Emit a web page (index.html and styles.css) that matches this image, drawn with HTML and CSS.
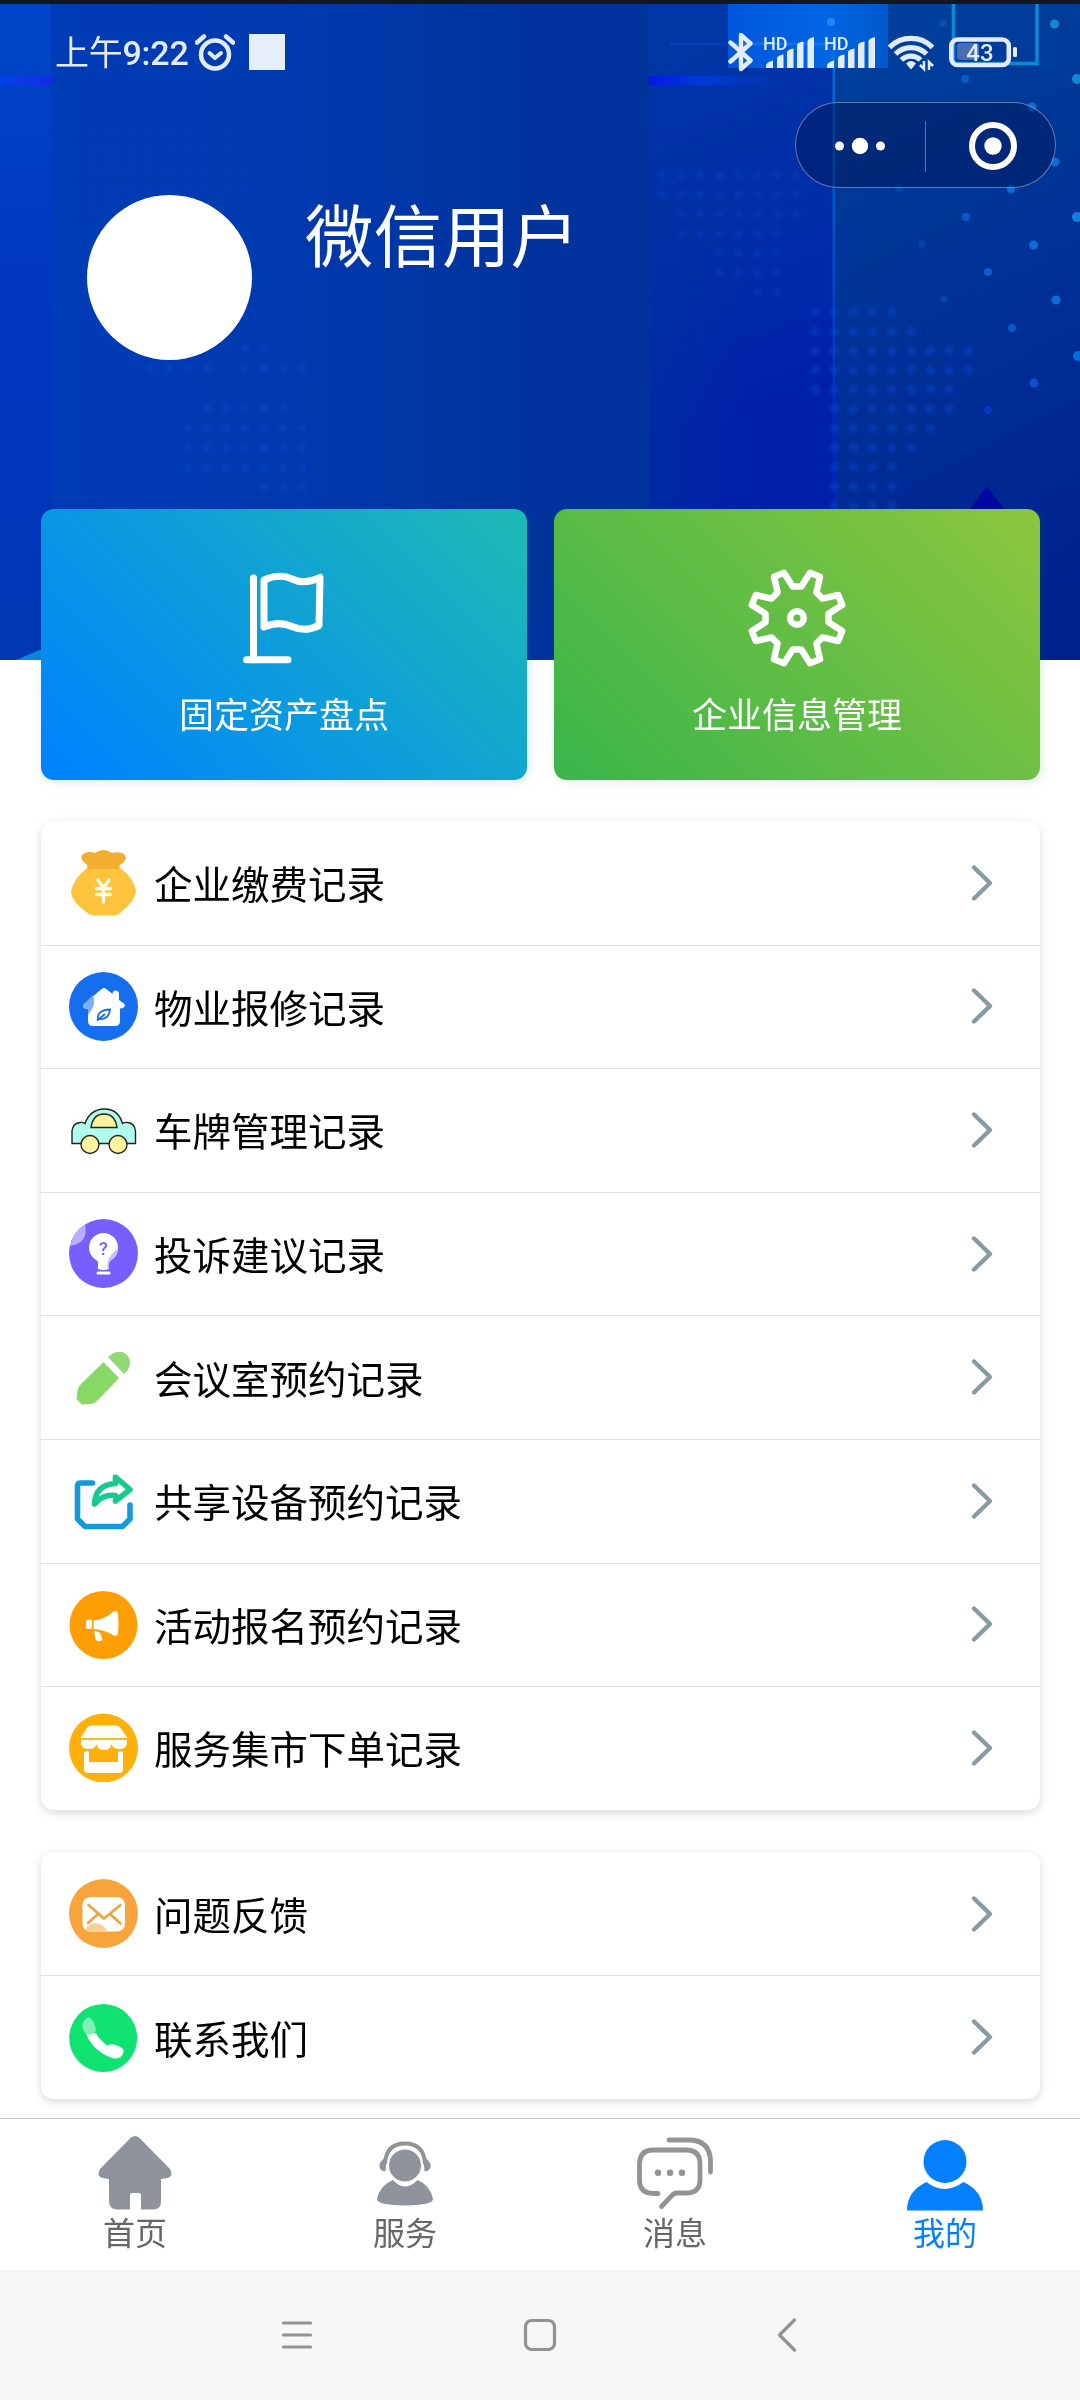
FILE: index.html
```html
<!DOCTYPE html>
<html lang="zh-CN">
<head>
<meta charset="utf-8">
<title>我的</title>
<link rel="stylesheet" href="styles.css">
</head>
<body>
<div class="screen">
  <header class="hero">
    <svg class="hero-art" viewBox="0 0 1080 660" aria-hidden="true">
      <defs>
        <linearGradient id="base" x1="0" x2="1"><stop offset="0" stop-color="#003cb8"/><stop offset=".25" stop-color="#003ab0"/><stop offset=".5" stop-color="#00339c"/><stop offset="1" stop-color="#003398"/></linearGradient>
        <linearGradient id="edge" x1="0" x2="0" y1="0" y2="1"><stop offset="0" stop-color="#0046c8"/><stop offset=".5" stop-color="#0035c2"/><stop offset="1" stop-color="#0037b2"/></linearGradient>
        <linearGradient id="mid" gradientUnits="userSpaceOnUse" x1="660" y1="60" x2="790" y2="400"><stop offset="0" stop-color="#0036a6"/><stop offset=".5" stop-color="#002ea8"/><stop offset="1" stop-color="#0020aa"/></linearGradient>
        <linearGradient id="midfade" x1="0" x2="1"><stop offset="0" stop-color="#00329c"/><stop offset="1" stop-color="#00329c" stop-opacity="0"/></linearGradient>
        <linearGradient id="right" x1="0.4" x2=".6" y1="0" y2="1"><stop offset="0" stop-color="#00409a"/><stop offset=".5" stop-color="#003097"/><stop offset="1" stop-color="#00208e"/></linearGradient>
        <linearGradient id="tile" x1="0" x2="1"><stop offset="0" stop-color="#0056dc"/><stop offset=".6" stop-color="#0066e4"/><stop offset="1" stop-color="#0058cc"/></linearGradient>
        <linearGradient id="streakL" x1="0" x2="1"><stop offset="0" stop-color="#0044f0"/><stop offset="1" stop-color="#2020f4"/></linearGradient>
        <linearGradient id="streakR" x1="0" x2="1"><stop offset="0" stop-color="#0a10f4"/><stop offset=".4" stop-color="#003cdc"/><stop offset="1" stop-color="#003cdc" stop-opacity="0"/></linearGradient>
        <linearGradient id="beam" x1="0" x2="0" y1="0" y2="1"><stop offset="0" stop-color="#0a78e0"/><stop offset=".35" stop-color="#0556c8"/><stop offset=".6" stop-color="#0828d0"/><stop offset="1" stop-color="#0010b0"/></linearGradient>
        <radialGradient id="dot"><stop offset="0" stop-color="#0a4ad0"/><stop offset="1" stop-color="#0a4ad0" stop-opacity="0"/></radialGradient>
        <pattern id="dotsR" x="805.4" y="302.4" width="19.2" height="19.4" patternUnits="userSpaceOnUse"><circle cx="9.6" cy="9.6" r="7.500" fill="url(#dot)"/></pattern>
        <pattern id="dotsM" x="652.6" y="165.4" width="19.1" height="19.6" patternUnits="userSpaceOnUse"><circle cx="9.6" cy="9.6" r="7" fill="url(#dot)"/></pattern>
        <pattern id="dotsL" x="178.4" y="398.4" width="19" height="19.8" patternUnits="userSpaceOnUse"><circle cx="9.6" cy="9.6" r="7" fill="url(#dot)"/></pattern>
        <symbol id="bars" viewBox="0 0 51 40"><path d="M2 36v-2q0-4 7-5.500V36zM13 36V26q1-3 6.500-3.500V36zM23 36V20q1-3 6.500-3.500V36zM33 36V13q1-3 6.500-3.500V36zM43.500 36V9q1-3 6.500-4V36z"/></symbol>
        <symbol id="chevron" viewBox="0 0 24 40"><path d="M4 4.500l16 15.500L4 35.500"/></symbol>
      </defs>
      <rect width="1080" height="660" fill="url(#base)"/>
      <rect width="51" height="660" fill="url(#edge)"/>
      <rect x="649" width="186" height="660" fill="url(#mid)"/>
      <rect x="649" y="200" width="100" height="460" fill="url(#midfade)" opacity=".5"/>
      <rect x="834" width="246" height="660" fill="url(#right)"/>
      <rect x="728" y="4" width="160" height="64" fill="url(#tile)"/>
      <path d="M730 44h98" stroke="#1c86f0" stroke-width="3" opacity=".5"/>
      <path d="M670 44h60" stroke="#1c66e0" stroke-width="3" opacity=".2"/>
      <path d="M953.500 4V63.500H1037V4" fill="none" stroke="#0a8ad4" stroke-width="3.500"/>
      <rect x="832.500" y="40" width="2.500" height="620" fill="url(#beam)" opacity=".8"/>
      <rect y="76" width="51" height="9" fill="url(#streakL)" opacity=".7"/>
      <rect x="649" y="76" width="130" height="9" fill="url(#streakR)" opacity=".85"/>
      <g opacity=".55">
        <path d="M805 302h96v19h19v20h58v38h-19v39h-20v19h-19v20h-20v58h-76V399h-19z" fill="url(#dotsR)"/>
        <path d="M653 165h153v60h-20v78h-38v-20h-38v-38h-38v-40h-19z" fill="url(#dotsM)" opacity=".7"/>
        <path d="M198 398h95v20h19v79h-57v-20h-77v-59h20zM140 358h76v20h-76zM235 338h38v20h38v20h-76z" fill="url(#dotsL)"/>
        <path d="M64 130h190v50h20v20h-150v100H64z" fill="url(#dotsL)" opacity=".4"/>
      </g>
      <g fill="#0a6cd8">
        <circle cx="1054.500" cy="24" r="4.500" fill="#1488c8"/><circle cx="1077" cy="79" r="5" fill="#1488d8"/><circle cx="965" cy="79" r="4" opacity=".7"/><circle cx="1032" cy="107" r="4.500"/><circle cx="1055" cy="162" r="4.500"/><circle cx="1011" cy="189" r="4"/><circle cx="1077" cy="217" r="5" fill="#1080e0"/><circle cx="966" cy="217" r="4" opacity=".7"/><circle cx="1033.500" cy="245" r="4.500"/><circle cx="988" cy="272" r="4" opacity=".8"/><circle cx="1056" cy="300" r="4.500"/><circle cx="1012" cy="328" r="4" opacity=".7"/><circle cx="1078" cy="356" r="5"/><circle cx="1034" cy="383" r="4.500" fill="#0c50d0"/><circle cx="988" cy="410" r="4" fill="#0838c8"/><circle cx="944" cy="299" r="4" opacity=".3"/><circle cx="922" cy="244" r="4" opacity=".25"/><circle cx="831" cy="22" r="4" fill="#2a90f8" opacity=".8"/><circle cx="943" cy="23" r="4" opacity=".4"/><circle cx="899" cy="188" r="4" opacity=".3"/>
      </g>
      <path d="M987 486l18 24h-36z" fill="#0008a0"/>
      <path d="M16 660l26-11v11z" fill="#0c86dc"/>
      <rect width="1080" height="4" fill="#15171c"/>
    </svg>

    <div class="status">
      <div class="status-left">
        <span class="clock">上午<b>9:22</b></span>
        <svg width="40" height="38" viewBox="0 0 40 38" fill="none" stroke="#e2ecfc" stroke-linecap="round">
          <circle cx="20" cy="21.500" r="14" stroke-width="4.500"/><path d="M14.500 20l5.500 5 6-5" stroke-width="4" stroke-linejoin="round"/><path d="M2 9.500l7-6M38 9.500l-7-6" stroke-width="4.500"/>
        </svg>
        <i class="block"></i>
      </div>
      <div class="status-right">
        <svg width="26" height="40" viewBox="0 0 26 40" fill="none" stroke="#e2ecfc" stroke-width="4.400" stroke-linejoin="round" stroke-linecap="round"><path d="M2.500 10.500L22.500 28.500L13 37V3l9.500 8.500L2.500 29.500"/></svg>
        <svg class="signal" width="51" height="40"><text class="hd" x="-1" y="17.500">HD</text><use href="#bars" width="51" height="40"/></svg>
        <svg class="signal" width="51" height="40"><text class="hd" x="-1" y="17.500">HD</text><use href="#bars" width="51" height="40"/></svg>
        <svg class="wifi" width="46" height="40" viewBox="0 0 46 40" fill="none" stroke="#e2ecfc" stroke-width="5.200"><path d="M1.500 15.500a30 30 0 0 1 43 0M7.500 22a22 22 0 0 1 31 0M13.500 28a13.500 13.500 0 0 1 19 0"/><path d="M18.500 31.500q4.500-4 9 0L23 37z" fill="#e2ecfc" stroke-width="1"/><path d="M36 29v8l-4-4M41 38v-8l4 4" stroke-width="2.500"/></svg>
        <svg class="battery" width="69" height="40" viewBox="0 0 69 40"><rect x="8" y="11" width="22" height="17" rx="3" fill="#4a6cb4"/><rect x="2.300" y="7.500" width="57.500" height="25.500" rx="6.500" fill="none" stroke="#e2ecfc" stroke-width="4.600"/><rect x="64" y="15" width="4" height="10" rx="1.500" fill="#e2ecfc"/><text class="pct" x="31" y="28.500">43</text></svg>
      </div>
    </div>

    <div class="capsule">
      <svg width="44" height="20" viewBox="0 0 44 20" fill="#fff"><circle cx="5.500" cy="10" r="4.500"/><circle cx="26" cy="10" r="8.200"/><circle cx="46.500" cy="10" r="4.500"/></svg>
      <i class="split"></i>
      <svg width="50" height="50" viewBox="0 0 50 50"><circle cx="25" cy="25" r="21" fill="none" stroke="#fff" stroke-width="6"/><circle cx="25" cy="25" r="8.700" fill="#fff"/></svg>
    </div>

    <div class="profile">
      <div class="avatar"></div>
      <h1 class="name">微信用户</h1>
    </div>
  </header>

  <main class="content">
    <section class="cards">
      <a class="card card-blue">
        <svg width="84" height="96" viewBox="0 0 84 96" fill="none" stroke="#fff" stroke-width="7" stroke-linecap="round" stroke-linejoin="round"><path d="M11.500 8v82M4.500 89.700H46M22 10q16-7 28-1t28-1.500l-1 48q-14 7-27 1t-28 .500z"/></svg>
        <span>固定资产盘点</span>
      </a>
      <a class="card card-green">
        <svg width="100" height="100" viewBox="-50 -50 100 100" fill="none" stroke="#fff" stroke-width="6.500" stroke-linejoin="round"><path d="M-4.300-31.500H4.300L13-45.200L23-41.200L19.400-25.500L25.500-19.400L41.200-23L45.200-13L31.500-4.300V4.300L45.200 13L41.200 23L25.500 19.400L19.400 25.500L23 41.200L13 45.200L4.300 31.500H-4.300L-13 45.200L-23 41.200L-19.400 25.500L-25.500 19.400L-41.200 23L-45.200 13L-31.500 4.300V-4.300L-45.200-13L-41.200-23L-25.500-19.400L-19.400-25.500L-23-41.200L-13-45.200z"/><circle r="6.800"/></svg>
        <span>企业信息管理</span>
      </a>
    </section>

    <ul class="list">
      <li><svg class="ico" viewBox="0 0 69 69"><path d="M18 20h33q14 10 16 23-1 10-14 20-3 4-8 4.500H25q-5-.500-9-4.500Q3 54 2 43.500 4 31 18 20z" fill="#fdc33c"/><path d="M18 21Q20 17 14 13.500Q10 8 15 5.500Q20 3 26 5Q34-1 43 5Q50 3 55 6Q59 10 54 15Q49 17 51 21z" fill="#f3ae31"/><path d="M29 32l5.500 8 5.500-8M27.500 40.500h14M27.500 46.500h14M34.500 40v14" fill="none" stroke="#fffbe8" stroke-width="3.400" stroke-linecap="round"/></svg><span>企业缴费记录</span><svg class="go"><use href="#chevron"/></svg></li>
      <li><svg class="ico" viewBox="0 0 69 69"><circle cx="34.500" cy="34.500" r="34.500" fill="#146eee"/><path d="M32 17.500q3-3 6 0l5.500 4.500q0-3.500 3.200-3.500t3.300 3.500v6l5 3.500q3 4-4 5V49q0 5-5 5H24q-5 0-5-5V37q-7-1-4-5z" fill="#fff"/><path d="M24 23q4 9-5 20v-6q-7-1-4-5z" fill="#7cb0f6"/><path d="M29 47q-1-9 12-9.500Q40 48 29 47zM28 48.500l8-6.500" fill="none" stroke="#146eee" stroke-width="1.800"/></svg><span>物业报修记录</span><svg class="go"><use href="#chevron"/></svg></li>
      <li><svg class="ico" viewBox="0 0 69 69" stroke="#222" stroke-width="1.400"><path d="M3 48.500V36q1-8 8-8.500 3-.500 5 1Q21 14.500 35 14t18.500 14.500q2-1.500 5-1 7 .500 8 8.500v12.500z" fill="#b0fbea"/><path d="M22 32.500Q24 19 35 19t13 13.500z" fill="#fff3a0"/><circle cx="21" cy="49.500" r="9" fill="#fff3a0"/><circle cx="49" cy="49.500" r="9" fill="#fff3a0"/></svg><span>车牌管理记录</span><svg class="go"><use href="#chevron"/></svg></li>
      <li><svg class="ico" viewBox="0 0 69 69"><circle cx="34.500" cy="34.500" r="34.500" fill="#785efc"/><path d="M1 27A34.500 34.500 0 0 1 16 5.500Q20 24 1 27z" fill="#bcaefc"/><path d="M29 50V43q-1-2-4-3.500a14.500 14.500 0 1 1 19 0Q40 42 40 45v5q-5.500 2-11 0z" fill="#fff"/><path d="M49 30q0 7-6 10.500-3 2-3 4v5l-1.500.500Q37 37 49 30z" fill="#c9bdfd"/><path d="M29 54h11" stroke="#fff" stroke-width="3" stroke-linecap="round"/><text class="bulb-q" x="34.500" y="36">?</text></svg><span>投诉建议记录</span><svg class="go"><use href="#chevron"/></svg></li>
      <li><svg class="ico" viewBox="0 0 69 69"><path d="M34.500 19L50 35 29 57q-3 3-7 4l-9 .500L7.500 56l1-9q1-4 4-6.500z" fill="#88d865"/><path d="M39 14q9-8 16.500-4 6 4 5.500 11-1 6-6 10z" fill="#92d977"/></svg><span>会议室预约记录</span><svg class="go"><use href="#chevron"/></svg></li>
      <li><svg class="ico" viewBox="0 0 69 69" fill="none" stroke-linecap="round" stroke-linejoin="round"><path d="M23.500 17H11.500q-3 0-3 3V53l7.500 7.500H53.500L61 53V39" stroke="#149adc" stroke-width="5.600"/><path d="M46.500 11L61 23.500 46.500 35V29.500Q34 28 25.500 38 26 19 46.500 17.500z" stroke="#17cb90" stroke-width="5.600"/></svg><span>共享设备预约记录</span><svg class="go"><use href="#chevron"/></svg></li>
      <li><svg class="ico" viewBox="0 0 69 69"><circle cx="34.500" cy="35" r="34" fill="#ff9e04"/><g fill="#fff"><path d="M24.500 30.500q12-1.500 19.500-8.500 4-3 5 1.500 1 11 0 20-1 4-5 1.500-8-5-19.500-6z"/><rect x="17" y="29.500" width="6" height="9.500" rx="2"/><path d="M25 41q6 0 7 4l1.500 5q-5 3-7-1z"/></g></svg><span>活动报名预约记录</span><svg class="go"><use href="#chevron"/></svg></li>
      <li><svg class="ico" viewBox="0 0 69 69"><circle cx="34.500" cy="35" r="34.500" fill="#ffb00a"/><g fill="#fffdf4"><path d="M22 12.500H47q3 0 5 3L58.500 25H11.500L17.500 15.500q2-3 4.500-3z"/><path d="M12 27h15.500v4q-1 5-7.700 5T12 31zM27.500 27h15v4q-1 6-7.500 6t-7.500-6zM42.500 27H58v4q-1 5-7.700 5t-7.800-5z"/><path d="M15 39q3-2 5 0V49H49V39q3-2 5 0V56q0 4-4 4H19q-4 0-4-4z"/></g><path d="M12 26H58" stroke="#f9bd3c" stroke-width="1.500"/></svg><span>服务集市下单记录</span><svg class="go"><use href="#chevron"/></svg></li>
    </ul>

    <ul class="list">
      <li><svg class="ico" viewBox="0 0 69 69"><circle cx="34.500" cy="34.500" r="34.500" fill="#f8a43c"/><rect x="13.500" y="18" width="42.500" height="34.500" rx="8" fill="#fff"/><path d="M16 49.500q10-10 20-1l2 4H22q-4 0-6-3z" fill="#fbd19a"/><path d="M19.500 26L35 39.500 51.500 26M19 44l10-9M51.500 44.500L41 35" fill="none" stroke="#f0a242" stroke-width="2.600" stroke-linecap="round"/></svg><span>问题反馈</span><svg class="go"><use href="#chevron"/></svg></li>
      <li><svg class="ico" viewBox="0 0 69 69"><circle cx="34.200" cy="35" r="34" fill="#10e272"/><path d="M15 25q6 6 12 5 2 5 11 12.500Q44 40 49 43q5 2 5.500 4 1 3-3 7-4 3-11 0Q21 46 15 25z" fill="#fff"/><path d="M20 14q-8 4-6.500 11 3 8 8.500 6.500 4-1 5-4-1-9-7-13.500z" fill="#80f0b0"/></svg><span>联系我们</span><svg class="go"><use href="#chevron"/></svg></li>
    </ul>
  </main>

  <nav class="tabs">
    <a><svg viewBox="0 0 76 76" fill="#8f949c"><path d="M34 2.500q4-3 8 0L73 34q4 7-2.500 9L64 44V67q0 7-7 7.500H44V60q0-2-2-2H35q-2 0-2 2V74.500H20q-7 0-8-7.500V44L5.500 43Q-1 41 3 34z"/></svg><span>首页</span></a>
    <a><svg viewBox="0 0 76 76" fill="#8f949c"><circle cx="38" cy="30.500" r="16"/><path d="M26 45q12 13 24.500 0Q63 50 66 64q0 6-28 6.500Q10 70 10 64q3-14 16-19z"/><path d="M18 29Q19 8.500 38 8.500T58 29" fill="none" stroke="#929292" stroke-width="4"/><path d="M17.500 23l2 2-1 11q-4 1-6-3.500-1-5 5-9.500zM58.500 23l-2 2 1 11q4 1 6-3.500 1-5-5-9.500z"/></svg><span>服务</span></a>
    <a><svg viewBox="0 0 76 76" fill="none" stroke="#939393" stroke-width="4.800" stroke-linecap="round"><path d="M21 58.500H16Q2.500 58 2.500 45V29Q3 15 16 15H49Q63 15 63 29V45Q63 58 49 58H40q-3 0-5 2.500L24.500 71.500"/><path d="M32 5H53Q73 6 73.500 26V37"/><g fill="#939393" stroke="none"><circle cx="21" cy="37.700" r="3.200"/><circle cx="33" cy="37.700" r="3.200"/><circle cx="45" cy="37.700" r="3.200"/></g></svg><span>消息</span></a>
    <a class="on"><svg viewBox="0 0 76 76" fill="#0480fe"><circle cx="38" cy="26.500" r="21.500"/><path d="M19.500 47Q37 61 56.500 47 76 56 76 75.500H0Q0 56 19.500 47z"/></svg><span>我的</span></a>
  </nav>

  <div class="sysnav">
    <svg viewBox="0 0 36 36"><path d="M5.500 6h27M5.500 18h27M5.500 30h27"/></svg>
    <svg viewBox="0 0 36 36"><rect x="3.500" y="3.500" width="29" height="29" rx="6"/></svg>
    <svg viewBox="0 0 36 36"><path d="M28.500 3L13.500 18l15 15"/></svg>
  </div>
</div>
</body>
</html>
```
FILE: styles.css
```css
* { box-sizing: border-box; margin: 0; padding: 0; }
body {
  background: #fff;
  color: #000;
  font-family: "Noto Sans CJK SC", sans-serif;
}
svg { display: block; flex: none; }
.screen {
  width: 1080px;
  height: 2400px;
  display: flex;
  flex-direction: column;
  overflow: hidden;
}

/* hero */
.hero { position: relative; height: 660px; flex: none; padding-top: 31px; }
.hero-art { position: absolute; left: 0; top: 0; width: 1080px; height: 660px; }
.status {
  position: relative;
  display: flex;
  justify-content: space-between;
  align-items: center;
  height: 42px;
  padding: 0 62px 0 55px;
  color: #e2ecfc;
}
.status-left, .status-right { display: flex; align-items: center; }
.clock { font-size: 34px; line-height: 42px; letter-spacing: -.3px; width: 140px; white-space: nowrap; }
.clock b { font-family: Roboto, sans-serif; font-weight: 500; font-size: 34px; letter-spacing: -.2px; }
.block { width: 36px; height: 36px; margin-left: 14px; background: #e6eef9; }
.status-right { gap: 10px; }
.signal { fill: #e2ecfc; }
.wifi { margin-left: 2px; }
.battery { margin-left: 5px; }
.hd { font: 500 18px Roboto, sans-serif; }
.pct { font: 500 24px Roboto, sans-serif; fill: #e2ecfc; text-anchor: middle; }
.capsule {
  position: absolute;
  left: 795px;
  top: 102px;
  width: 261px;
  height: 86px;
  border: 1px solid rgba(255, 255, 255, .38);
  border-radius: 43px;
  background: rgba(0, 20, 80, .45);
  display: flex;
  align-items: center;
  padding: 2px 37px 0 38px;
  justify-content: space-between;
}
.capsule svg { overflow: visible; }
.split { width: 1px; height: 51px; margin-left: 5px; background: rgba(255, 255, 255, .35); }
.profile { position: relative; display: flex; gap: 53px; padding: 122px 0 0 87px; }
.avatar { width: 165px; height: 165px; border-radius: 50%; background: #fff; }
.name { font-size: 68.500px; font-weight: 400; line-height: 75px; color: #fff; }

/* content */
.content { position: relative; flex: none; height: 1609px; margin-top: -151px; padding: 0 40px 0 41px; }
.cards { display: grid; grid-template-columns: 1fr 1fr; gap: 27px; height: 271px; }
.card {
  display: flex;
  flex-direction: column;
  align-items: center;
  border-radius: 13px;
  color: #fff;
  font-size: 35px;
  line-height: 50px;
}
.card svg { height: 100px; margin-top: 59px; margin-bottom: 20px; }
.card-blue { background: linear-gradient(45deg, #0081ff, #1cbbb4); box-shadow: 2px 2px 10px rgba(0, 100, 200, .16); }
.card-green { background: linear-gradient(45deg, #39b54a, #8dc63f); box-shadow: 2px 2px 10px rgba(40, 140, 60, .16); }
.list {
  list-style: none;
  margin-top: 41px;
  border-radius: 13px;
  background: #fff;
  box-shadow: 0 3px 10px rgba(0, 0, 0, .15);
}
.list + .list { margin-top: 42px; }
.list li {
  display: flex;
  align-items: center;
  height: 123.600px;
  padding: 0 46px 0 28px;
  font-size: 38.500px;
  box-shadow: 0 1px 0 #e0e0e0;
}
.list li:last-child { box-shadow: none; }
.list span { flex: 1; margin-left: 16px; line-height: 56px; padding-bottom: 1px; }
.ico { width: 69px; height: 69px; }
.go { width: 24px; height: 40px; fill: none; stroke: #8799a3; stroke-width: 4.400; stroke-linecap: round; stroke-linejoin: round; }
.bulb-q { font: 500 18px Roboto, sans-serif; fill: #785efc; text-anchor: middle; }

/* bottom bars */
.tabs {
  position: relative;
  flex: none;
  height: 152px;
  border-top: 1.500px solid #c4c4c4;
  background: #fff;
  display: grid;
  grid-template-columns: repeat(4, 1fr);
  color: #666;
  font-size: 32px;
  line-height: 40px;
}
.tabs a { display: flex; flex-direction: column; align-items: center; padding-top: 16px; }
.tabs svg { width: 76px; height: 76px; }
.tabs .on { color: #0480fe; }
.sysnav { flex: 1; display: flex; justify-content: center; gap: 208px; padding-top: 47px; background: #f6f6f6; }
.sysnav svg { width: 36px; height: 36px; fill: none; stroke: #929292; stroke-width: 3.200; stroke-linecap: round; stroke-linejoin: round; }
```
